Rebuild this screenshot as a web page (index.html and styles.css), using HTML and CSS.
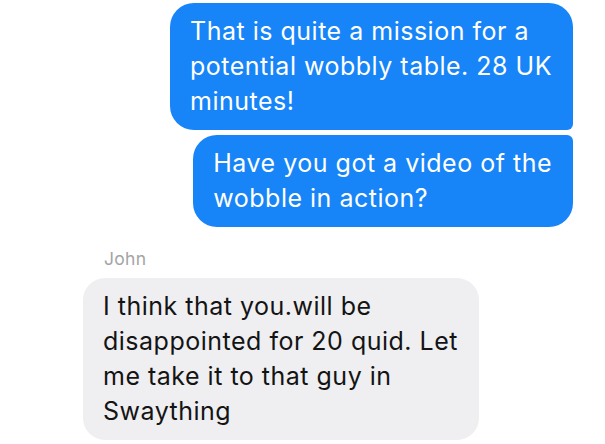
FILE: index.html
```html
<!DOCTYPE html>
<html lang="en">

<head>
    <meta charset="UTF-8">
    <meta name="viewport" content="width=device-width, initial-scale=1.0">
    <title>Messages</title>
    <link rel="stylesheet" href="styles.css">
</head>

<body>
    <div class="thread">
        <!-- outgoing messages -->
        <div class="group outgoing">
            <div class="bubble sent first">That is quite a mission for a<br>potential wobbly table. 28 UK<br>minutes!</div>
            <div class="bubble sent last">Have you got a video of the<br>wobble in action?</div>
        </div>
        <!-- incoming message -->
        <div class="group incoming">
            <div class="sender">John</div>
            <div class="bubble received">I think that you.will be<br>disappointed for 20 quid. Let<br>me take it to that guy in<br>Swaything</div>
        </div>
    </div>
</body>

</html>
```

FILE: styles.css
```css
body {
    margin: 0;
    background-color: #fff;
    font-family: Inter, "Liberation Sans", sans-serif;
}

.thread {
    display: flex;
    flex-direction: column;
    padding: 3px 32px 0 83px;
}

.group {
    display: flex;
    flex-direction: column;
}

.outgoing {
    align-items: flex-end;
    gap: 5px;
}

.incoming {
    align-items: flex-start;
    margin-top: 21px;
}

.bubble {
    font-size: 25px;
    line-height: 35px;
    letter-spacing: 0.5px;
    padding: 11px 21px 11px 20px;
    border-radius: 24px;
}

.sent {
    background-color: #1784f8;
    color: #fff;
}

.sent.first {
    border-bottom-right-radius: 6px;
}

.sent.last {
    border-top-right-radius: 6px;
}

.sender {
    font-size: 17.5px;
    line-height: 22px;
    letter-spacing: 0.3px;
    color: #a4a4a6;
    padding-left: 21px;
    margin-bottom: 8px;
}

.received {
    background-color: #efeff1;
    color: #141414;
    border-radius: 22px;
}
```
